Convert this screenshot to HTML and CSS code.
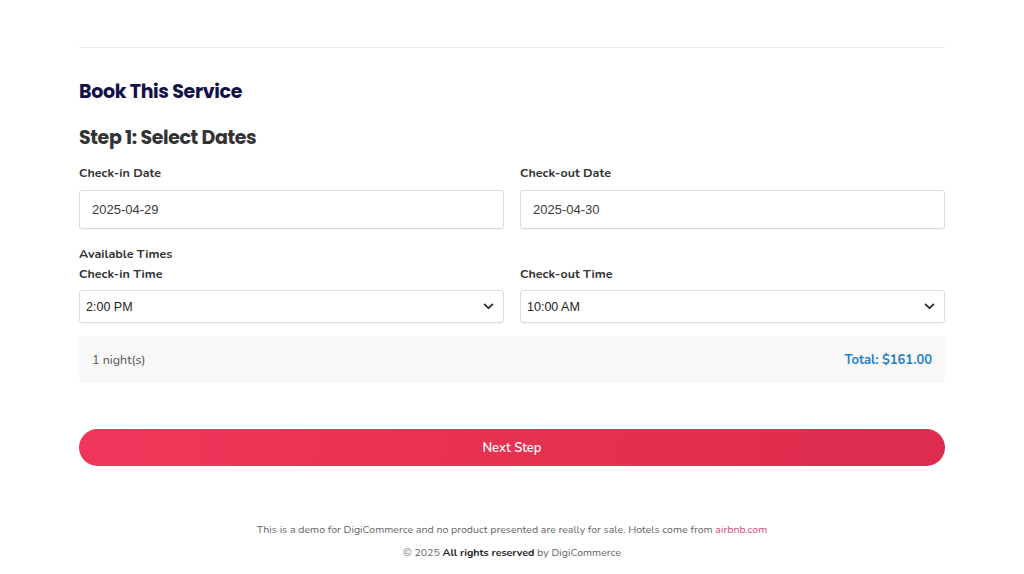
FILE: index.html
```html
<!DOCTYPE html>
<html lang="en">
<head>
<meta charset="utf-8">
<title>Book This Service</title>
<link rel="stylesheet" href="styles.css">
</head>
<body>
<main class="page">
  <hr class="divider">
  <h2 class="title">Book This Service</h2>
  <h3 class="step">Step 1: Select Dates</h3>

  <div class="grid dates">
    <div class="field">
      <label class="label">Check-in Date</label>
      <div class="input">2025-04-29</div>
    </div>
    <div class="field">
      <label class="label">Check-out Date</label>
      <div class="input">2025-04-30</div>
    </div>
  </div>

  <div class="times">
    <div class="label avail">Available Times</div>
    <div class="grid">
      <div class="field">
        <label class="label">Check-in Time</label>
        <div class="select"><span>2:00 PM</span>
          <svg class="chev" viewBox="0 0 12 8" width="11" height="7"><path d="M1.5 1.5 L6 6 L10.5 1.5" fill="none" stroke="#222" stroke-width="2" stroke-linecap="round" stroke-linejoin="round"/></svg>
        </div>
      </div>
      <div class="field">
        <label class="label">Check-out Time</label>
        <div class="select"><span>10:00 AM</span>
          <svg class="chev" viewBox="0 0 12 8" width="11" height="7"><path d="M1.5 1.5 L6 6 L10.5 1.5" fill="none" stroke="#222" stroke-width="2" stroke-linecap="round" stroke-linejoin="round"/></svg>
        </div>
      </div>
    </div>
  </div>

  <div class="summary">
    <span class="nights">1 night(s)</span>
    <span class="total">Total: $161.00</span>
  </div>

  <button class="next">Next Step</button>

  <footer class="footer">
    <p>This is a demo for DigiCommerce and no product presented are really for sale. Hotels come from <a href="#">airbnb.com</a></p>
    <p>© 2025 <strong>All rights reserved</strong> by DigiCommerce</p>
  </footer>
</main>
</body>
</html>
```
FILE: styles.css
```css
* { box-sizing: border-box; }
html, body { margin: 0; padding: 0; background: #fff; }
body { font-family: "Nunito", Lato, "Open Sans", sans-serif; color: #333; }
.page { width: 866px; margin: 0 auto; padding-top: 47px; }
.divider { border: 0; border-top: 1px solid #ececec; margin: 0; }
.title {
  font-family: "Poppins", Inter, sans-serif; font-weight: 700; font-size: 19px;
  color: #13114a; margin: 31px 0 0; line-height: 26px; letter-spacing: -0.35px;
}
.step {
  font-family: "Poppins", Inter, sans-serif; font-weight: 700; font-size: 19px;
  color: #333; margin: 20px 0 0; line-height: 26px; letter-spacing: -0.4px;
}
.grid { display: grid; grid-template-columns: 1fr 1fr; column-gap: 16px; }
.dates { margin-top: 13px; }
.label { display: block; font-size: 12.5px; font-weight: 700; color: #333; line-height: 18px; margin-bottom: 8px; }
.input {
  height: 39px; border: 1px solid #d9d9d9; border-radius: 3px; padding: 0 12px;
  display: flex; align-items: center; font-family: "Liberation Sans", Arial, sans-serif;
  font-size: 13px; color: #3a3a3a; box-shadow: 0 1px 1px rgba(0,0,0,0.04);
}
.times { margin-top: 16px; }
.label.avail { margin-bottom: 2px; }
.times .grid .label { margin-bottom: 7px; }
.select {
  height: 33px; border: 1px solid #dcdcdc; border-radius: 3px; padding: 0 9px 0 6px;
  display: flex; align-items: center; justify-content: space-between;
  font-family: "Liberation Sans", Arial, sans-serif; font-size: 12.5px; color: #222;
  box-shadow: 0 1px 1px rgba(0,0,0,0.04);
}
.summary {
  margin-top: 13px; height: 47px; background: #f8f8f8; border-radius: 4px;
  display: flex; align-items: center; justify-content: space-between; padding: 0 13px;
}
.nights { font-size: 12.5px; color: #555; }
.total { font-size: 13px; font-weight: 700; color: #1f7fc8; }
.next {
  display: block; width: 100%; height: 37px; margin-top: 46px; border: 0; border-radius: 19px;
  background: linear-gradient(100deg, #f2365b 0%, #e5304f 60%, #dc2c4f 100%);
  color: #fff; font-family: "Nunito", Lato, sans-serif; font-size: 13px; font-weight: 600;
  cursor: pointer;
}
.footer { margin-top: 56px; text-align: center; font-size: 10.6px; color: #666; }
.footer p { margin: 0 0 8px; line-height: 15px; }
.footer a { color: #e0487a; text-decoration: none; }
.footer strong { color: #222; font-weight: 700; }
```
